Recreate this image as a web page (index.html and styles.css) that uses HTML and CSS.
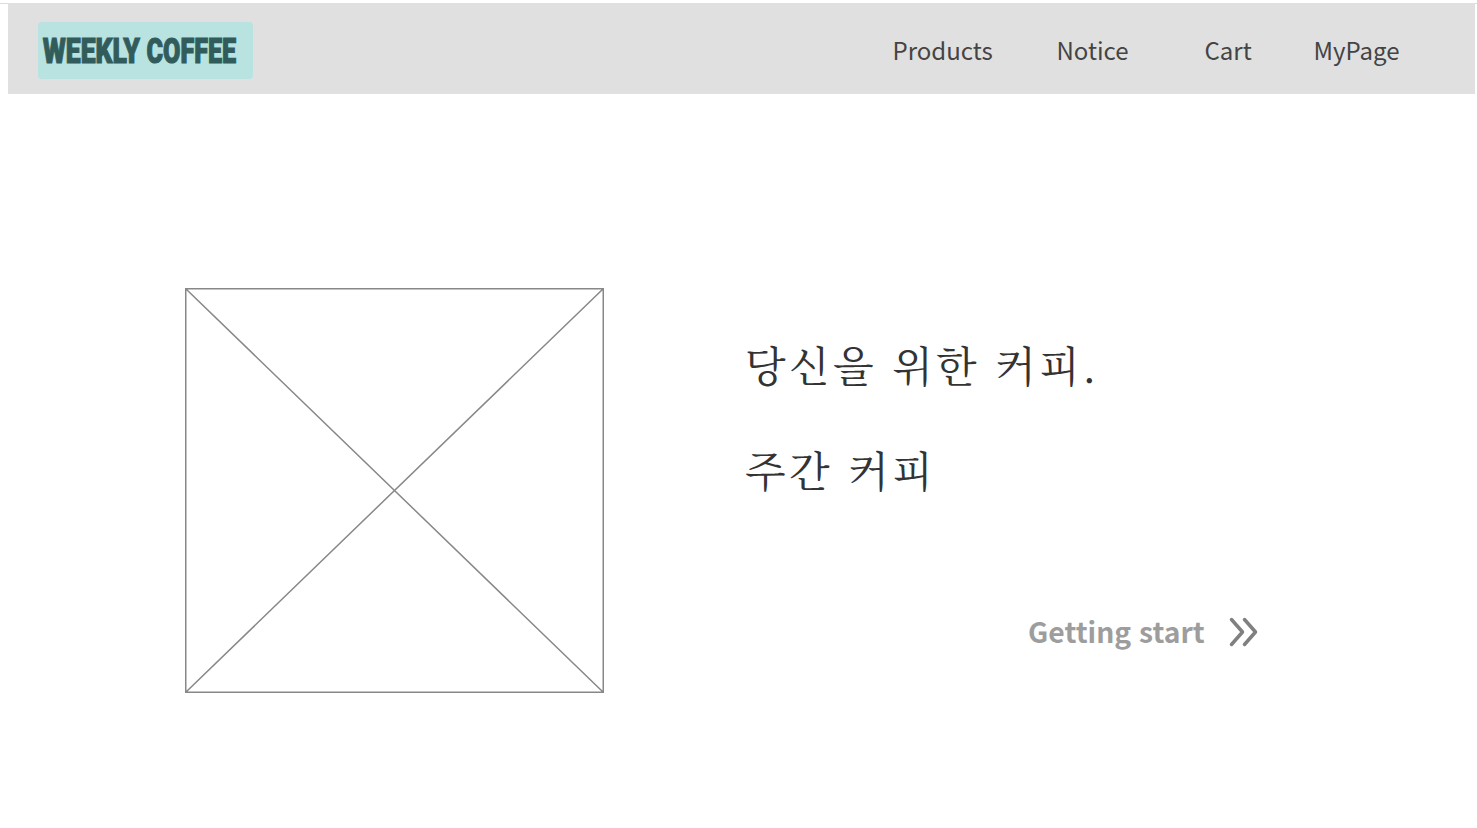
FILE: index.html
```html
<!DOCTYPE html>
<html lang="ko">
<head>
<meta charset="utf-8">
<title>Weekly Coffee</title>
<link rel="stylesheet" href="styles.css">
</head>
<body>
<header class="header">
<a class="logo"><svg class="logo-svg" width="215" height="57"><g transform="scale(.68 1)"><text class="logo-text" x="7" y="40.9" textLength="143" lengthAdjust="spacingAndGlyphs">WEEKLY</text><text class="logo-text" x="159.5" y="40.9" textLength="132" lengthAdjust="spacingAndGlyphs">COFFEE</text></g></svg></a>
<nav class="nav"><a class="products">Products</a><a class="notice">Notice</a><a class="cart">Cart</a><a class="mypage">MyPage</a></nav>
</header>
<main class="hero">
<svg class="placeholder" width="419" height="405" viewBox="0 0 419 405"><path d="M.75 .75H418.25V404.25H.75ZL418.25 404.25M418.25 .75L.75 404.25"/></svg>
<section class="copy">
<h1 class="line">당신을 위한 커피<span class="dot">.</span></h1>
<h1 class="line">주간 커피</h1>
<a class="start"><span>Getting start</span><svg class="chevrons" width="30" height="30" viewBox="0 0 30 30"><path d="M3.5 2.5L14.5 15L3.5 27.5M16.5 2.5L27.5 15L16.5 27.5"/></svg></a>
</section>
</main>
</body>
</html>
```
FILE: styles.css
```css
body { margin: 0; padding-top: 3px; height: 828px; overflow: hidden; background: linear-gradient(#dcdcdc, #dcdcdc) 0 3px / 100% 1px no-repeat #fff; box-sizing: border-box; }
.header { display: flex; align-items: center; height: 91px; margin: 0 2px 0 8px; background: #e0e0e0; }
.logo { display: block; margin-left: 30px; height: 57px; margin-top: 3px; background: #b8e3e1; border-radius: 4px; }
.logo-svg { display: block; overflow: visible; }
.logo-text { font: 900 35px Roboto, sans-serif; fill: #315c5b; stroke: #315c5b; stroke-width: 1.1; }
.nav { display: flex; margin-left: 639.5px; font: 24px/36px "Noto Sans CJK KR", sans-serif; color: #444; margin-top: 3px; white-space: nowrap; }
.products { width: 164px; }
.notice { width: 148px; }
.cart { width: 109px; }
.hero { display: flex; }
.placeholder { margin: 194px 0 0 185px; fill: none; stroke: #888; stroke-width: 1.5; }
.copy { margin: 229px 0 0 141px; width: 520px; }
.line { margin: 0; height: 105px; font: 400 42px/82px "Noto Serif CJK KR", "Noto Sans CJK KR", serif; letter-spacing: 3.4px; word-spacing: -1.2px; color: #333; white-space: nowrap; }
.dot { position: relative; top: 1.5px; margin-left: 1px; font-size: 30px; line-height: 1; font-weight: 700; }
.start { display: flex; align-items: center; margin: 76px 0 0 283px; font: 700 28.3px/44px "Noto Sans CJK KR", sans-serif; color: #9d9d9d; white-space: nowrap; }
.chevrons { margin: 1px 0 0 23px; fill: none; stroke: #808080; stroke-width: 3.5; stroke-linecap: round; stroke-linejoin: round; }
```
